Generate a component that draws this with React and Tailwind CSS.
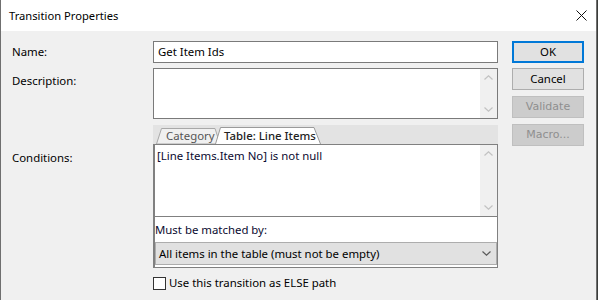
function Chevron({ up, color = '#c2c2c2' }) {
  return (
    <svg width="9" height="5" viewBox="0 0 9 5" className="block">
      <path d={up ? 'M0.5 4.5 L4.5 0.8 L8.5 4.5' : 'M0.5 0.5 L4.5 4.2 L8.5 0.5'} fill="none" stroke={color} strokeWidth="1.2" />
    </svg>
  )
}

function Scrollbar() {
  return (
    <div className="flex w-[17px] flex-col items-center justify-between bg-[#f0f0f0] py-[6px]">
      <Chevron up />
      <Chevron />
    </div>
  )
}

function Button({ children, primary, disabled, className = '' }) {
  return (
    <div
      className={
        'flex h-[22px] items-center justify-center ' +
        (primary
          ? 'border-2 border-[#0078d7] bg-[#e1e1e1] text-black '
          : disabled
            ? "border border-[#bfbfbf] bg-[#cccccc] font-['DejaVu_Sans',sans-serif] text-[11px] text-[#8f8f8f] "
            : 'border border-[#adadad] bg-[#e1e1e1] text-black ') +
        className
      }
    >
      {children}
    </div>
  )
}

export default function App() {
  return (
    <div className="flex h-[300px] w-[598px] bg-[#3b3d3a] font-['Noto_Sans',sans-serif] text-[11.4px] leading-[16px] text-black">
      <div className="flex w-[597px] flex-col border-x border-[#6f6f6f]">
        <div className="flex h-[31px] items-center justify-between bg-white pl-[8px] pr-[9px]">
          <span className="text-[11.2px]">Transition Properties</span>
          <svg width="11" height="11" viewBox="0 0 11 11">
            <path d="M0.5 0.5 L10.5 10.5 M10.5 0.5 L0.5 10.5" stroke="#111" strokeWidth="1" />
          </svg>
        </div>

        <div className="flex flex-1 bg-[#f0f0f0]">
          <div className="flex w-[497px] flex-col pl-[11px] pt-[10px]">
            <div className="flex items-center">
              <span className="w-[141px]">Name:</span>
              <div className="flex h-[22px] flex-1 items-center border border-[#7a7a7a] bg-white pl-[4px]">Get Item Ids</div>
            </div>

            <div className="mt-[5px] flex">
              <span className="w-[141px] pt-[5px]">Description:</span>
              <div className="flex h-[51px] flex-1 justify-end border border-[#7a7a7a] bg-white">
                <Scrollbar />
              </div>
            </div>

            <div className="mt-[6px] flex">
              <span className="w-[141px] pt-[25px]">Conditions:</span>
              <div className="flex flex-1 flex-col">
                <div className="flex h-[19px] items-end bg-[#e3e3e3] pl-[3px]">
                  <div className="relative flex h-[16px] w-[64px] items-center whitespace-nowrap pl-[10px] text-[#555]">
                    <svg width="64" height="16" viewBox="0 0 64 16" className="absolute left-0 top-0">
                      <path d="M0.5 16 L5.5 0.5 L59 0.5 L64 16 Z" fill="#f0f0f0" stroke="#a8a8a8" />
                    </svg>
                    <span className="relative">Category</span>
                  </div>
                  <div className="relative -ml-[5px] flex h-[17px] w-[106px] items-center whitespace-nowrap pl-[9px] font-medium text-[#222]">
                    <svg width="106" height="17" viewBox="0 0 106 17" className="absolute left-0 top-0">
                      <path d="M0.5 17 L5.5 0.5 L99 0.5 L105.5 17" fill="#ffffff" stroke="#9a9a9a" />
                    </svg>
                    <span className="relative">Table: Line Items</span>
                  </div>
                </div>

                <div className="flex h-[124px] flex-col border border-l-2 border-[#808080] bg-white">
                  <div className="flex h-[72px] border-b border-[#808080]">
                    <div className="flex-1 pl-[2px] pt-[3px] text-[#0a0a30]">[Line Items.Item No] is not null</div>
                    <Scrollbar />
                  </div>
                  <div className="flex h-[25px] items-center text-[#0a0a30]">Must be matched by:</div>
                  <div className="flex h-[23px] items-center justify-between border border-[#adadad] bg-[#e1e1e1] pl-[3px] pr-[5px]">
                    <span>All items in the table (must not be empty)</span>
                    <Chevron color="#5a5a5a" />
                  </div>
                </div>

                <div className="mt-[7px] flex items-center">
                  <div className="h-[13px] w-[13px] border border-[#333] bg-white" />
                  <span className="ml-[3px]">Use this transition as ELSE path</span>
                </div>
              </div>
            </div>
          </div>

          <div className="ml-[14px] flex w-[72px] flex-col pt-[10px]">
            <Button primary>OK</Button>
            <Button className="mt-[5px]">Cancel</Button>
            <Button disabled className="mt-[6px]">Validate</Button>
            <Button disabled className="mt-[6px]">Macro...</Button>
          </div>
        </div>
      </div>
    </div>
  )
}
